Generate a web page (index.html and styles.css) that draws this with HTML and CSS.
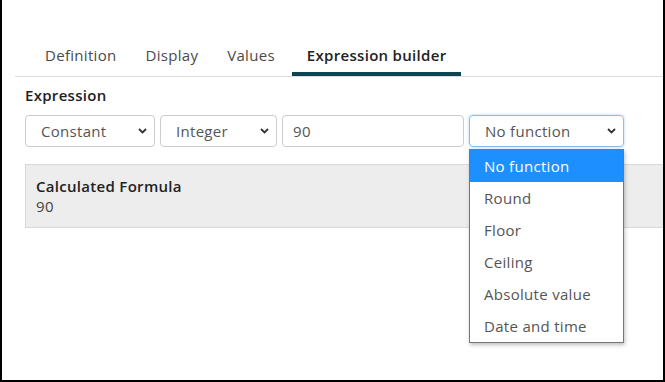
FILE: index.html
```html
<!DOCTYPE html>
<html>
<head>
<meta charset="utf-8">
<link rel="stylesheet" href="styles.css">
</head>
<body>
<div class="frame">
  <div class="tabs">
    <div class="tab">Definition</div>
    <div class="tab">Display</div>
    <div class="tab">Values</div>
    <div class="tab active">Expression builder</div>
  </div>
  <div class="content">
    <div class="label">Expression</div>
    <div class="row">
      <div class="select w1"><span>Constant</span><svg class="chev" width="9" height="6" viewBox="0 0 9 6"><path d="M1 1 L4.5 4.5 L8 1" fill="none" stroke="#333" stroke-width="1.8"/></svg></div>
      <div class="select w2"><span>Integer</span><svg class="chev" width="9" height="6" viewBox="0 0 9 6"><path d="M1 1 L4.5 4.5 L8 1" fill="none" stroke="#333" stroke-width="1.8"/></svg></div>
      <div class="input w3">90</div>
      <div class="select w4 focus"><span>No function</span><svg class="chev" width="9" height="6" viewBox="0 0 9 6"><path d="M1 1 L4.5 4.5 L8 1" fill="none" stroke="#333" stroke-width="1.8"/></svg></div>
    </div>
    <div class="result">
      <div class="result-title">Calculated Formula</div>
      <div class="result-value">90</div>
    </div>
  </div>
  <ul class="menu">
    <li class="opt selected">No function</li>
    <li class="opt">Round</li>
    <li class="opt">Floor</li>
    <li class="opt">Ceiling</li>
    <li class="opt">Absolute value</li>
    <li class="opt">Date and time</li>
  </ul>
</div>
</body>
</html>
```
FILE: styles.css
```css
html, body {
  margin: 0;
  padding: 0;
  background: #fff;
}
body {
  font-family: "Open Sans", "Noto Sans", sans-serif;
  font-size: 15px;
  letter-spacing: 0.3px;
  color: #444;
}
.frame {
  position: relative;
  width: 665px;
  height: 382px;
  box-sizing: border-box;
  border-left: 2px solid #000;
  border-right: 2px solid #000;
  border-bottom: 2px solid #000;
  padding-top: 38px;
  overflow: hidden;
}
.tabs {
  display: flex;
  margin-left: 13px;
  padding-left: 15px;
  border-bottom: 1px solid #dcdcdc;
}
.tab {
  padding: 7px 15px 7px;
  line-height: 20px;
  color: #4a4a4a;
  border-bottom: 4px solid transparent;
}
.tab + .tab {
  margin-left: -1px;
}
.tab.active {
  font-weight: 600;
  color: #222;
  border-bottom-color: #0b4452;
  margin-left: 2px;
  padding-left: 15px;
}
.content {
  padding-left: 23px;
}
.label {
  margin-top: 8px;
  line-height: 20px;
  font-weight: 600;
  color: #222;
}
.row {
  display: flex;
  gap: 5px;
  margin-top: 10px;
}
.select, .input {
  box-sizing: border-box;
  height: 32px;
  border: 1px solid #ccc;
  border-radius: 4px;
  display: flex;
  align-items: center;
  color: #555;
}
.select {
  padding: 0 7px 0 15px;
  justify-content: space-between;
}
.input {
  padding: 0 10px;
}
.w1 { width: 130px; }
.w2 { width: 117px; }
.w3 { width: 182px; }
.w4 { width: 155px; }
.focus {
  border-color: #8bbbf0;
  box-shadow: 0 0 3px rgba(80, 150, 230, 0.45);
}
.result {
  margin-top: 17px;
  height: 64px;
  box-sizing: border-box;
  background: #ededed;
  border: 1px solid #d8d8d8;
  border-right: none;
  padding: 11px 10px 0;
}
.result-title {
  font-weight: 600;
  color: #222;
  line-height: 20px;
}
.result-value {
  line-height: 20px;
  color: #444;
}
.menu {
  position: absolute;
  left: 467px;
  top: 149px;
  width: 155px;
  margin: 0;
  padding: 0;
  list-style: none;
  box-sizing: border-box;
  border: 1px solid #767676;
  background: #fff;
  box-shadow: 1px 2px 4px rgba(0, 0, 0, 0.25);
}
.opt {
  height: 32px;
  line-height: 32px;
  padding-left: 14px;
  color: #555;
}
.opt.selected {
  background: #1e8fff;
  color: #fff;
}
```
